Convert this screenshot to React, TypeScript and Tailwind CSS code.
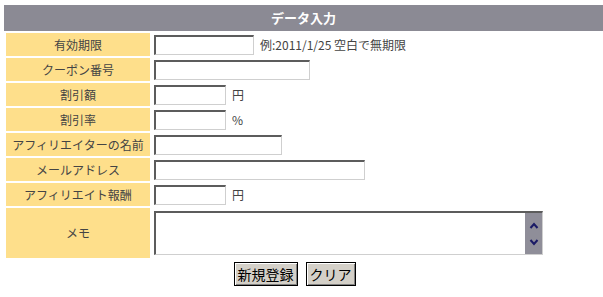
import React from "react";

const font = { fontFamily: '"Noto Sans CJK JP", "Noto Sans", sans-serif' };

function Label({ children, tall }: { children: React.ReactNode; tall?: boolean }) {
  return (
    <div
      className={`bg-[#fedf8b] flex items-center justify-center text-[12px] text-[#444444] ${
        tall ? "h-[50px]" : "h-[23px]"
      }`}
    >
      {children}
    </div>
  );
}

function Input({ w }: { w: string }) {
  return (
    <input
      type="text"
      className={`${w} h-[20px] bg-white outline-none border-t-2 border-l-2 border-r border-b border-t-[#5c5c5c] border-l-[#5c5c5c] border-r-[#cfcfcf] border-b-[#cfcfcf]`}
    />
  );
}

function Field({ children }: { children: React.ReactNode }) {
  return <div className="h-[23px] flex items-center pl-[2px] text-[12px] text-[#444444]">{children}</div>;
}

export default function App() {
  return (
    <div className="w-[603px] h-[297px] bg-white pt-[5px] pl-[4px]" style={font}>
      <div className="h-[26px] bg-[#8b8a94] flex items-center justify-center text-white font-bold text-[13px]">
        データ入力
      </div>
      <div className="grid grid-cols-[144px_1fr] gap-[2px] p-[2px]">
        <Label>有効期限</Label>
        <Field>
          <Input w="w-[100px]" />
          <span className="ml-[6px]">例:2011/1/25 空白で無期限</span>
        </Field>

        <Label>クーポン番号</Label>
        <Field>
          <Input w="w-[156px]" />
        </Field>

        <Label>割引額</Label>
        <Field>
          <Input w="w-[72px]" />
          <span className="ml-[6px]">円</span>
        </Field>

        <Label>割引率</Label>
        <Field>
          <Input w="w-[72px]" />
          <span className="ml-[6px]">%</span>
        </Field>

        <Label>アフィリエイターの名前</Label>
        <Field>
          <Input w="w-[128px]" />
        </Field>

        <Label>メールアドレス</Label>
        <Field>
          <Input w="w-[211px]" />
        </Field>

        <Label>アフィリエイト報酬</Label>
        <Field>
          <Input w="w-[72px]" />
          <span className="ml-[6px]">円</span>
        </Field>

        <Label tall>メモ</Label>
        <div className="h-[50px] flex items-center pl-[2px]">
          <div className="w-[389px] h-[44px] flex bg-white border-t-2 border-l-2 border-r border-b border-t-[#5c5c5c] border-l-[#5c5c5c] border-r-[#cfcfcf] border-b-[#cfcfcf]">
            <textarea className="flex-1 resize-none outline-none border-0 bg-white" />
            <div className="w-[17px] bg-[#8f8e99] flex flex-col items-center justify-center gap-[10px]">
              <svg width="10" height="7" viewBox="0 0 10 7">
                <path d="M1.5 6 L5 2 L8.5 6" stroke="#1a1a66" strokeWidth="2" fill="none" />
              </svg>
              <svg width="10" height="7" viewBox="0 0 10 7">
                <path d="M1.5 1 L5 5 L8.5 1" stroke="#1a1a66" strokeWidth="2" fill="none" />
              </svg>
            </div>
          </div>
        </div>
      </div>
      <div className="flex justify-center gap-[8px] pr-[18px] mt-[2px]">
        <button className="h-[24px] px-[3px] bg-[#d4d0c8] text-black text-[14px] border border-black shadow-[inset_1px_1px_0_#ffffff,inset_-1px_-1px_0_#808080] leading-none">
          新規登録
        </button>
        <button className="h-[24px] px-[3px] bg-[#d4d0c8] text-black text-[14px] border border-black shadow-[inset_1px_1px_0_#ffffff,inset_-1px_-1px_0_#808080] leading-none">
          クリア
        </button>
      </div>
    </div>
  );
}
